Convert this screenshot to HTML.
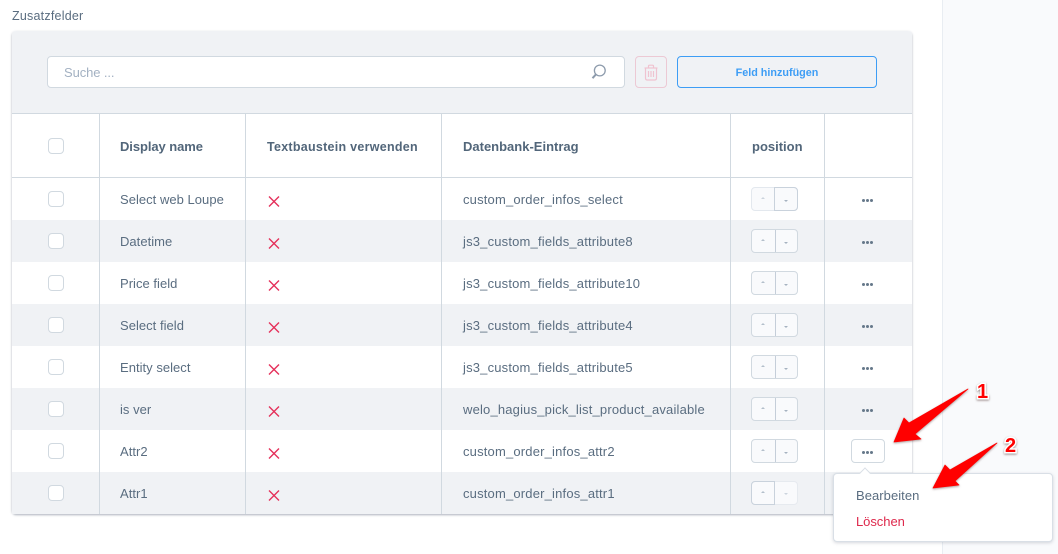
<!DOCTYPE html>
<html lang="de">
<head>
<meta charset="utf-8">
<title>Zusatzfelder</title>
<style>
html,body{margin:0;padding:0;background:#fff}
body{position:relative;width:1058px;height:554px;overflow:hidden;font-family:"Liberation Sans",sans-serif;font-size:13px;color:#5a6d80}
div,span{box-sizing:border-box}
.a{position:absolute}
.t{position:absolute;white-space:nowrap;line-height:16px}
.side{left:942px;top:0;width:116px;height:554px;background:#f9fafc;border-left:1px solid #e9edf2}
.card{left:12px;top:31px;width:900px;height:483px;background:#fff;border-radius:4px;box-shadow:0 1px 2px rgba(90,100,120,.5);overflow:hidden}
.tool{left:0;top:0;width:900px;height:83px;background:#f0f2f5;border-bottom:1px solid #d1d9e0}
.row{left:12px;width:900px;height:42px}
.v{top:113px;width:1px;height:401px;background:#d1d9e0}
.h{font-weight:bold;color:#52667a;top:139px;font-size:13px}
.c{left:48px;width:16px;height:16px;background:#fff;border:1px solid #d1d9e0;border-radius:4px}
.n{left:120px;font-size:13px;letter-spacing:.03px;margin-top:1px}
.k{left:463px;font-size:13px;letter-spacing:.18px;margin-top:1px}
.st{left:751px;width:47px;height:24px;border:1px solid #d1d9e0;border-radius:4px;background:#f9fafc}
.st i{position:absolute;left:23px;top:0;width:1px;height:22px;background:#c5ced9}
.up,.dn{position:absolute;width:0;height:0;border-left:2.5px solid transparent;border-right:2.5px solid transparent}
.up{left:9px;top:9px;border-bottom:2px solid #b4bfcb}
.dn{left:32px;top:12px;border-top:2px solid #a6b2c0}
.dots{left:862px;width:12px;height:3px}
.dots b{position:absolute;top:0;width:3px;height:3px;border-radius:50%;background:#66788a}
</style>
</head>
<body>
<div class="a side"></div>
<div class="t" style="left:12px;top:8px;font-size:12.5px;letter-spacing:.22px;color:#5a6d80">Zusatzfelder</div>
<div class="a card"><div class="a tool"></div></div>

<div class="a" style="left:47px;top:56px;width:578px;height:32px;background:#fff;border:1px solid #d1d9e0;border-radius:4px"></div>
<div class="t" style="left:64px;top:65px;color:#a3b1c2;font-size:13px;letter-spacing:-.1px">Suche ...</div>
<svg class="a" style="left:591px;top:63px" width="18" height="18" viewBox="0 0 18 18" fill="none" stroke="#8d9bac"><circle cx="8.8" cy="7.5" r="5.4" stroke-width="1.3"/><path d="M4.9 11.4L1.5 15.2" stroke-width="2"/></svg>

<div class="a" style="left:635px;top:56px;width:32px;height:32px;border:1px solid #ecc9d4;border-radius:4px;background:#f0f2f5"></div>
<svg class="a" style="left:642px;top:63px" width="18" height="18" viewBox="0 0 18 18" fill="none" stroke="#efc3d0" stroke-width="1.2"><path d="M2.5 5H15.5"/><path d="M6.5 4.5V3Q6.5 2.2 7.5 2.2H10.5Q11.5 2.2 11.5 3V4.5"/><path d="M3.5 5V15Q3.5 17 5 17H13Q14.5 17 14.5 15V5"/><path d="M6.5 8V14M9 8V14M11.5 8V14"/></svg>

<div class="a" style="left:677px;top:56px;width:200px;height:32px;border:1px solid #3d9df5;border-radius:4px;background:#f0f2f5"></div>
<div class="t" style="left:677px;width:200px;top:65px;text-align:center;color:#3d9df5;font-weight:bold;font-size:10.8px">Feld hinzufügen</div>

<div class="a row" style="top:220px;background:#f0f2f5"></div>
<div class="a row" style="top:304px;background:#f0f2f5"></div>
<div class="a row" style="top:388px;background:#f0f2f5"></div>
<div class="a row" style="top:472px;background:#f0f2f5"></div>
<div class="a" style="left:12px;top:177px;width:900px;height:1px;background:#d1d9e0"></div>

<div class="a v" style="left:99px"></div>
<div class="a v" style="left:245px"></div>
<div class="a v" style="left:441px"></div>
<div class="a v" style="left:730px"></div>
<div class="a v" style="left:824px"></div>

<div class="t h" style="left:120px;letter-spacing:-.08px">Display name</div>
<div class="t h" style="left:267px;font-size:12.5px;letter-spacing:.27px">Textbaustein verwenden</div>
<div class="t h" style="left:463px">Datenbank-Eintrag</div>
<div class="t h" style="left:752px">position</div>

<div class="a c" style="top:138px"></div>
<div class="a c" style="top:191px"></div>
<div class="a c" style="top:233px"></div>
<div class="a c" style="top:275px"></div>
<div class="a c" style="top:317px"></div>
<div class="a c" style="top:359px"></div>
<div class="a c" style="top:401px"></div>
<div class="a c" style="top:443px"></div>
<div class="a c" style="top:485px"></div>

<div class="t n" style="top:191px">Select web Loupe</div>
<div class="t n" style="top:233px">Datetime</div>
<div class="t n" style="top:275px">Price field</div>
<div class="t n" style="top:317px">Select field</div>
<div class="t n" style="top:359px">Entity select</div>
<div class="t n" style="top:401px">is ver</div>
<div class="t n" style="top:443px">Attr2</div>
<div class="t n" style="top:485px">Attr1</div>

<div class="t k" style="top:191px">custom_order_infos_select</div>
<div class="t k" style="top:233px">js3_custom_fields_attribute8</div>
<div class="t k" style="top:275px">js3_custom_fields_attribute10</div>
<div class="t k" style="top:317px">js3_custom_fields_attribute4</div>
<div class="t k" style="top:359px">js3_custom_fields_attribute5</div>
<div class="t k" style="top:401px">welo_hagius_pick_list_product_available</div>
<div class="t k" style="top:443px">custom_order_infos_attr2</div>
<div class="t k" style="top:485px">custom_order_infos_attr1</div>

<svg class="a" style="left:267px;top:195px" width="14" height="320" viewBox="0 0 14 320" fill="none" stroke="#e5305a" stroke-width="1.4">
<path d="M2 1.5L12 11.5M12 1.5L2 11.5"/>
<path d="M2 43.5L12 53.5M12 43.5L2 53.5"/>
<path d="M2 85.5L12 95.5M12 85.5L2 95.5"/>
<path d="M2 127.5L12 137.5M12 127.5L2 137.5"/>
<path d="M2 169.5L12 179.5M12 169.5L2 179.5"/>
<path d="M2 211.5L12 221.5M12 211.5L2 221.5"/>
<path d="M2 253.5L12 263.5M12 253.5L2 263.5"/>
<path d="M2 295.5L12 305.5M12 295.5L2 305.5"/>
</svg>

<div class="a" style="left:751px;top:187px;width:47px;height:24px;background:#f9fafc;border:1px solid #e3e8ee;border-radius:4px"><span class="up" style="border-bottom-color:#ccd4dd"></span></div>
<div class="a" style="left:774px;top:187px;width:24px;height:24px;border:1px solid #c9d2dc;border-radius:0 4px 4px 0"><span class="dn" style="left:9px"></span></div>
<div class="a st" style="top:229px"><i></i><span class="up"></span><span class="dn"></span></div>
<div class="a st" style="top:271px"><i></i><span class="up"></span><span class="dn"></span></div>
<div class="a st" style="top:313px"><i></i><span class="up"></span><span class="dn"></span></div>
<div class="a st" style="top:355px"><i></i><span class="up"></span><span class="dn"></span></div>
<div class="a st" style="top:397px"><i></i><span class="up"></span><span class="dn"></span></div>
<div class="a st" style="top:439px"><i></i><span class="up"></span><span class="dn"></span></div>
<div class="a" style="left:751px;top:481px;width:47px;height:24px;background:#f9fafc;border:1px solid #e6eaef;border-radius:4px"></div>
<div class="a" style="left:751px;top:481px;width:24px;height:24px;border:1px solid #c9d2dc;border-radius:4px 0 0 4px"><span class="up"></span></div>
<span class="dn" style="left:784px;top:493px;border-top-color:#ccd4dd"></span>

<div class="a dots" style="top:199px"><b style="left:0"></b><b style="left:4px"></b><b style="left:8px"></b></div>
<div class="a dots" style="top:241px"><b style="left:0"></b><b style="left:4px"></b><b style="left:8px"></b></div>
<div class="a dots" style="top:283px"><b style="left:0"></b><b style="left:4px"></b><b style="left:8px"></b></div>
<div class="a dots" style="top:325px"><b style="left:0"></b><b style="left:4px"></b><b style="left:8px"></b></div>
<div class="a dots" style="top:367px"><b style="left:0"></b><b style="left:4px"></b><b style="left:8px"></b></div>
<div class="a dots" style="top:409px"><b style="left:0"></b><b style="left:4px"></b><b style="left:8px"></b></div>
<div class="a" style="left:851px;top:439px;width:34px;height:24px;background:#fff;border:1px solid #d1d9e0;border-radius:4px"></div>
<div class="a dots" style="top:451px"><b style="left:0"></b><b style="left:4px"></b><b style="left:8px"></b></div>

<div class="a" style="left:833px;top:473px;width:220px;height:69px;background:#fff;border-radius:4px;border:1px solid #d9dfe6;box-shadow:0 1px 3px rgba(90,100,120,.25)"></div>
<div class="a" style="left:861px;top:469px;width:8px;height:8px;background:#fff;border-left:1px solid #d9dfe6;border-top:1px solid #d9dfe6;transform:rotate(45deg)"></div>
<div class="t" style="left:856px;top:488px;font-size:13px;letter-spacing:.05px;color:#5a6d80">Bearbeiten</div>
<div class="t" style="left:856px;top:514px;font-size:13px;letter-spacing:-.05px;color:#de294c">Löschen</div>

<svg class="a" style="left:0;top:0" width="1058" height="554" viewBox="0 0 1058 554">
<g fill="#f00" stroke="#f00" stroke-width=".8" stroke-linejoin="round" style="filter:drop-shadow(0 1px 1px rgba(90,60,60,.5))">
<path d="M968 389L909 423L904 418L894 442L921 439L915 434Z"/>
<path d="M997 443L950 470L945 465L933 488L959 485L955 481Z"/>
</g>
<g font-family="'Liberation Sans',sans-serif" font-weight="bold" font-size="20" fill="#f00" stroke="#fff" stroke-width="3" paint-order="stroke" style="filter:drop-shadow(0 1px 1px rgba(90,60,60,.6))">
<text x="977" y="398">1</text>
<text x="1005" y="452">2</text>
</g>
</svg>
</body>
</html>
